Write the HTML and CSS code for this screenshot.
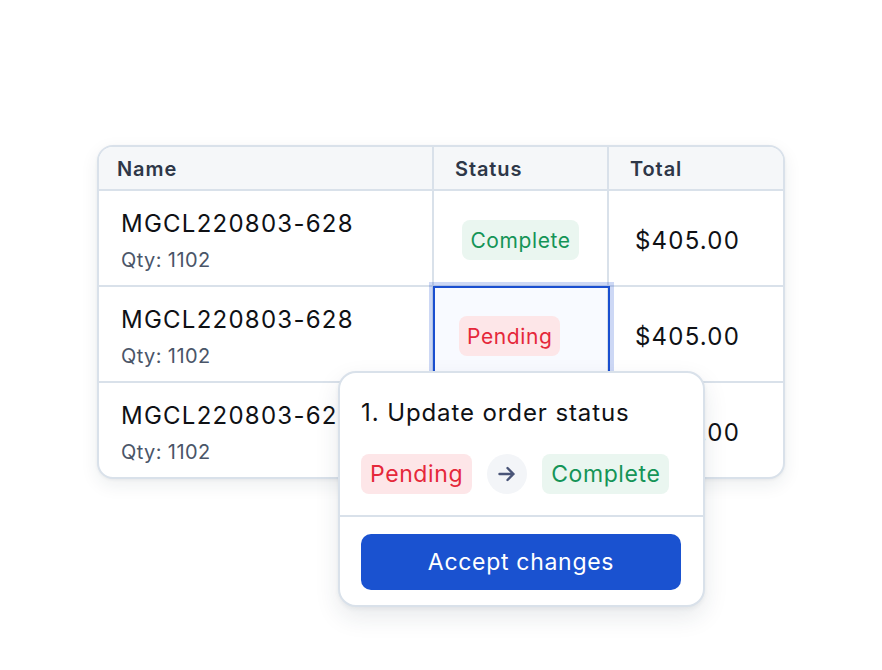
FILE: index.html
```html
<!DOCTYPE html>
<html lang="en">
<head>
<meta charset="utf-8">
<title>Orders</title>
<link rel="stylesheet" href="styles.css">
</head>
<body>
<div class="stage">
  <div class="table">
    <div class="row head">
      <div class="cell c-name">Name</div>
      <div class="cell c-status">Status</div>
      <div class="cell c-total">Total</div>
    </div>
    <div class="row">
      <div class="cell c-name"><div class="sku">MGCL220803-628</div><div class="qty">Qty: 1102</div></div>
      <div class="cell c-status center"><span class="badge ok">Complete</span></div>
      <div class="cell c-total"><span class="amt">$405.00</span></div>
    </div>
    <div class="row">
      <div class="cell c-name"><div class="sku">MGCL220803-628</div><div class="qty">Qty: 1102</div></div>
      <div class="cell c-status selected"><span class="badge bad">Pending</span></div>
      <div class="cell c-total"><span class="amt">$405.00</span></div>
    </div>
    <div class="row last">
      <div class="cell c-name"><div class="sku">MGCL220803-628</div><div class="qty">Qty: 1102</div></div>
      <div class="cell c-status"></div>
      <div class="cell c-total"><span class="amt">$405.00</span></div>
    </div>
  </div>

  <div class="popover">
    <div class="pop-top">
      <div class="pop-title">1. Update order status</div>
      <div class="change">
        <span class="badge big bad">Pending</span>
        <span class="arrow"><svg width="20" height="20" viewBox="0 0 20 20"><path d="M2.5 10h14M10.5 4l6 6-6 6" fill="none" stroke="#4a5578" stroke-width="2.4" stroke-linecap="round" stroke-linejoin="round"/></svg></span>
        <span class="badge big ok">Complete</span>
      </div>
    </div>
    <div class="pop-bottom">
      <button class="accept">Accept changes</button>
    </div>
  </div>
</div>
</body>
</html>
```
FILE: styles.css
```css
* { box-sizing: border-box; }
html, body { margin: 0; padding: 0; background: #ffffff; }
body {
  font-family: Inter, "Noto Sans", sans-serif;
  color: #0f1115;
  width: 882px;
  height: 670px;
  overflow: hidden;
}
.stage {
  position: relative;
  padding: 145px 0 0 97px;
}
.table {
  width: 688px;
  border: 2px solid #d9e1ea;
  border-radius: 16px;
  overflow: hidden;
  background: #fff;
  box-shadow: 0 6px 18px rgba(30, 45, 70, 0.08), 0 1px 3px rgba(30, 45, 70, 0.06);
}
.row {
  display: grid;
  grid-template-columns: 335px 175px 174px;
  height: 96px;
  border-bottom: 2px solid #d9e1ea;
}
.row.last { border-bottom: none; height: 94px; }
.row.head {
  height: 44px;
  background: #f5f7f9;
}
.cell {
  border-right: 2px solid #d9e1ea;
  display: flex;
  flex-direction: column;
  justify-content: center;
  padding-top: 4px;
}
.cell.c-total { border-right: none; }
.head .cell {
  font-size: 20px;
  font-weight: 600;
  color: #2e3748;
  letter-spacing: 0.9px;
  padding-top: 1px;
}
.c-name { padding-left: 22px; padding-top: 6px; }
.head .cell.c-name { padding-left: 18px; padding-top: 1px; }
.head .c-status, .head .c-total { padding-left: 21px; }
.sku { font-size: 24px; letter-spacing: 1.25px; line-height: 30px; }
.qty { font-size: 20px; color: #4a5568; line-height: 28px; margin-top: 7px; letter-spacing: 0.4px; }
.c-status { padding-left: 25px; align-items: flex-start; }
.c-status.center { padding-left: 0; align-items: center; }
.c-total { padding-left: 26px; }
.amt { font-size: 24px; letter-spacing: 1.2px; }
.selected {
  position: relative;
  background: #f8faff;
  outline: 2px solid #1a4fd0;
  outline-offset: -1px;
  box-shadow: 0 0 0 5px rgba(26, 79, 208, 0.22);
}
.badge {
  display: inline-flex;
  align-items: center;
  height: 40px;
  padding: 0 8px;
  border-radius: 8px;
  font-size: 21px;
  letter-spacing: 0.6px;
}
.badge.big { font-size: 23px; letter-spacing: 0.6px; padding: 0 9px; }
.badge.ok { background: #eaf6f0; color: #159457; }
.badge.bad { background: #fde6e8; color: #e5283a; }

.popover {
  position: absolute;
  left: 338px;
  top: 371px;
  width: 367px;
  background: #fff;
  border: 2px solid #d9e1ea;
  border-radius: 18px;
  box-shadow: 0 10px 24px rgba(30, 45, 70, 0.10), 0 2px 4px rgba(30, 45, 70, 0.06);
}
.pop-top {
  padding: 20px 21px 21px;
  border-bottom: 2px solid #d9e1ea;
}
.pop-title {
  font-size: 24px;
  line-height: 40px;
  color: #0f1115;
  letter-spacing: 0.9px;
}
.change {
  margin-top: 21px;
  display: flex;
  align-items: center;
  gap: 15px;
}
.arrow {
  width: 40px;
  height: 40px;
  border-radius: 50%;
  background: #f3f5f8;
  display: flex;
  align-items: center;
  justify-content: center;
}
.pop-bottom {
  padding: 17px 22px 15px 21px;
}
.accept {
  display: block;
  width: 320px;
  height: 56px;
  border: none;
  border-radius: 10px;
  background: #1a52d0;
  color: #fff;
  font-family: inherit;
  font-size: 23px;
  letter-spacing: 0.7px;
}
```
